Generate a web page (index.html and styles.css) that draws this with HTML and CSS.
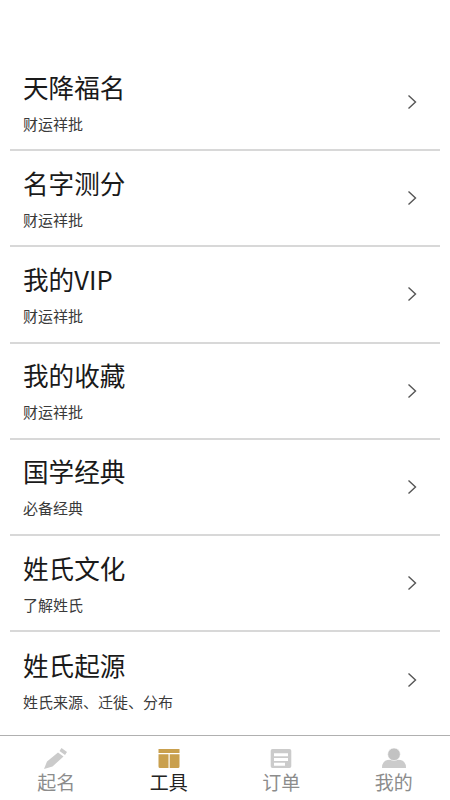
FILE: index.html
```html
<!DOCTYPE html>
<html>
<head>
    <title>工具</title>
    <link rel="stylesheet" href="styles.css">
</head>
<body>
    <div class="page">
        <div class="list">
            <div class="item">
                <div class="item-text">
                    <div class="item-title">天降福名</div>
                    <div class="item-sub">财运祥批</div>
                </div>
                <svg class="arrow" viewBox="0 0 10 16"><path d="M1.5 1.5L8.5 8L1.5 14.5"/></svg>
            </div>
            <div class="item">
                <div class="item-text">
                    <div class="item-title">名字测分</div>
                    <div class="item-sub">财运祥批</div>
                </div>
                <svg class="arrow" viewBox="0 0 10 16"><path d="M1.5 1.5L8.5 8L1.5 14.5"/></svg>
            </div>
            <div class="item">
                <div class="item-text">
                    <div class="item-title">我的VIP</div>
                    <div class="item-sub">财运祥批</div>
                </div>
                <svg class="arrow" viewBox="0 0 10 16"><path d="M1.5 1.5L8.5 8L1.5 14.5"/></svg>
            </div>
            <div class="item">
                <div class="item-text">
                    <div class="item-title">我的收藏</div>
                    <div class="item-sub">财运祥批</div>
                </div>
                <svg class="arrow" viewBox="0 0 10 16"><path d="M1.5 1.5L8.5 8L1.5 14.5"/></svg>
            </div>
            <div class="item">
                <div class="item-text">
                    <div class="item-title">国学经典</div>
                    <div class="item-sub">必备经典</div>
                </div>
                <svg class="arrow" viewBox="0 0 10 16"><path d="M1.5 1.5L8.5 8L1.5 14.5"/></svg>
            </div>
            <div class="item">
                <div class="item-text">
                    <div class="item-title">姓氏文化</div>
                    <div class="item-sub">了解姓氏</div>
                </div>
                <svg class="arrow" viewBox="0 0 10 16"><path d="M1.5 1.5L8.5 8L1.5 14.5"/></svg>
            </div>
            <div class="item last">
                <div class="item-text">
                    <div class="item-title">姓氏起源</div>
                    <div class="item-sub">姓氏来源、迁徙、分布</div>
                </div>
                <svg class="arrow" viewBox="0 0 10 16"><path d="M1.5 1.5L8.5 8L1.5 14.5"/></svg>
            </div>
        </div>
        <div class="tabbar">
            <div class="tab">
                <svg class="tab-icon" viewBox="0 0 24 24"><path class="grey" d="M17.5 1L23 5L21 8L15.500 4ZM14 5.500L19.500 9.500L8.500 19.500L0 22L3 14.500Z"/></svg>
                <span>起名</span>
            </div>
            <div class="tab active">
                <svg class="tab-icon" viewBox="0 0 24 24"><path class="gold" d="M1.500 2H22.500V6H1.500ZM1.500 7.300H11.500V21H3Q1.500 21 1.500 19.500ZM12.700 7.300H22.500V19.500Q22.500 21 21 21H12.700Z"/></svg>
                <span>工具</span>
            </div>
            <div class="tab">
                <svg class="tab-icon" viewBox="0 0 24 24"><path class="grey" fill-rule="evenodd" d="M3.500 2H20.500Q22.300 2 22.300 3.800V19.200Q22.300 21 20.500 21H3.500Q1.700 21 1.700 19.200V3.800Q1.700 2 3.500 2ZM5 6.300V9.300H19V6.300ZM5 11V14H19V11ZM5 15.700V18.700H16V15.700Z"/></svg>
                <span>订单</span>
            </div>
            <div class="tab">
                <svg class="tab-icon" viewBox="0 0 24 24"><path class="grey" d="M0 21Q0 12.700 8 12.700H16Q24 12.700 24 21Z"/><circle class="head" cx="12" cy="7.300" r="6.300"/></svg>
                <span>我的</span>
            </div>
        </div>
    </div>
</body>
</html>
```

FILE: styles.css
```css
* {
    margin: 0;
    padding: 0;
    box-sizing: border-box;
    font-family: "Noto Sans CJK SC", "Liberation Sans", sans-serif;
}
body {
    background-color: #fff;
}
.page {
    width: 450px;
    height: 800px;
    display: flex;
    flex-direction: column;
    justify-content: space-between;
}
.list {
    padding: 55px 10px 0;
}
.item {
    height: 96.2px;
    padding: 0 13px;
    display: flex;
    align-items: center;
    justify-content: space-between;
    border-bottom: 2px solid #d8d8d8;
}
.item.last {
    border-bottom: none;
}
.item-text {
    margin-bottom: 2px;
}
.item-title {
    font-size: 25.6px;
    line-height: 36px;
    color: #1a1a1a;
}
.item-sub {
    margin-top: 9px;
    font-size: 15px;
    line-height: 20px;
    color: #3a3a3a;
}
.arrow {
    width: 10px;
    height: 16px;
    margin-right: 10px;
    flex-shrink: 0;
}
.arrow path {
    fill: none;
    stroke: #555;
    stroke-width: 1.4;
}
.tabbar {
    height: 65px;
    border-top: 1px solid #b0b0b0;
    display: flex;
}
.tab {
    flex: 1;
    display: flex;
    flex-direction: column;
    align-items: center;
    padding-top: 11px;
    font-size: 19px;
    line-height: 22px;
    color: #8c8c8c;
}
.tab.active {
    color: #222;
}
.tab-icon {
    width: 24px;
    height: 24px;
}
.grey {
    fill: #cbcbcb;
}
.head {
    fill: #c2c2c2;
    stroke: #fff;
    stroke-width: 0.6;
}
.gold {
    fill: #c9a04e;
}
```
